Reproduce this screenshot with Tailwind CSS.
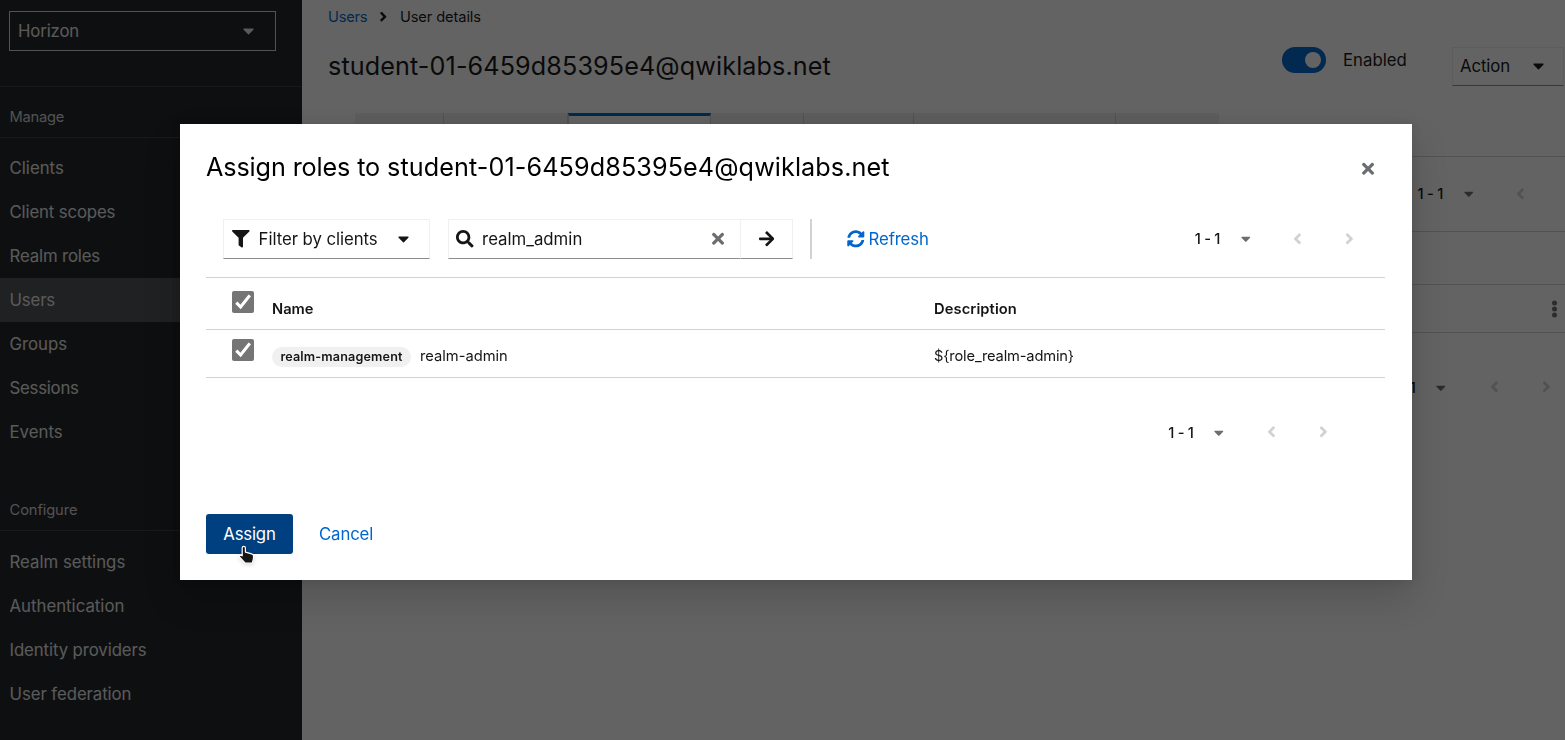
<!DOCTYPE html>
<html lang="en">
<head>
<meta charset="utf-8">
<title>User details</title>
<script src="https://cdn.jsdelivr.net/npm/@tailwindcss/browser@4"></script>
</head>
<body class="h-[740px] w-[1565px] overflow-hidden bg-white font-['Inter',sans-serif] text-[16.8px] leading-6 text-[#151515]">
<svg class="hidden">
  <symbol id="caret" viewBox="0 0 320 512"><path fill="currentColor" d="M31.3 192h257.3c17.8 0 26.7 21.5 14.1 34.1L174.1 354.8c-7.8 7.8-20.5 7.8-28.3 0L17.2 226.1C4.6 213.5 13.5 192 31.3 192z"/></symbol>
  <symbol id="angle" viewBox="0 0 256 512"><path fill="currentColor" d="M224.3 273l-136 136c-9.4 9.4-24.6 9.4-33.9 0l-22.6-22.6c-9.4-9.4-9.4-24.6 0-33.9l96.4-96.4-96.4-96.4c-9.4-9.4-9.4-24.6 0-33.9L54.3 103c9.4-9.4 24.6-9.4 33.9 0l136 136c9.5 9.4 9.5 24.6.1 34z"/></symbol>
  <symbol id="times" viewBox="0 0 352 512"><path fill="currentColor" d="M242.72 256l100.07-100.07c12.28-12.28 12.28-32.19 0-44.48l-22.24-22.24c-12.28-12.28-32.19-12.28-44.48 0L176 189.28 75.93 89.21c-12.28-12.28-32.19-12.28-44.48 0L9.21 111.45c-12.28 12.28-12.28 32.19 0 44.48L109.28 256 9.21 356.07c-12.28 12.28-12.28 32.19 0 44.48l22.24 22.24c12.28 12.28 32.2 12.28 44.48 0L176 322.72l100.07 100.07c12.28 12.28 32.2 12.28 44.48 0l22.24-22.24c12.28-12.28 12.28-32.19 0-44.48L242.72 256z"/></symbol>
  <symbol id="check" viewBox="0 0 22 22"><rect width="22" height="22" rx="2" fill="#757575"/><path d="M4.3 11.7 8.6 16 17.8 4.4" fill="none" stroke="#fff" stroke-width="3.1"/></symbol>
</svg>

<div class="flex h-full">
  <aside class="flex w-[302px] shrink-0 flex-col bg-[#212427] text-[#e6e6e6]">
    <div class="h-[87px] border-b border-[#3c3f42] pt-[11px] pl-[9px]">
      <div class="flex h-10 w-[267px] items-center justify-between border border-[#d2d2d2] pr-[21px] pl-2">
        <span class="tracking-[-0.15px]">Horizon</span>
        <svg class="h-[17.6px] w-[11px]"><use href="#caret"/></svg>
      </div>
    </div>
    <h2 class="flex h-[51px] items-end border-b border-[#3c3f42] pb-[8px] pl-[9.5px] text-[14.7px] tracking-[-0.25px] text-[#d2d2d2]">Manage</h2>
    <nav class="flex flex-col pt-2 tracking-[-0.15px] *:flex *:h-11 *:items-center *:pl-[9.5px]">
      <a class="tracking-normal">Clients</a>
      <a>Client scopes</a>
      <a>Realm roles</a>
      <a class="bg-[#4f5255]">Users</a>
      <a class="tracking-normal">Groups</a>
      <a class="tracking-[-0.25px]">Sessions</a>
      <a class="tracking-normal">Events</a>
    </nav>
    <h2 class="flex h-[77px] items-end border-b border-[#3c3f42] pb-[8px] pl-[9.5px] text-[14.7px] tracking-[-0.1px] text-[#d2d2d2]">Configure</h2>
    <nav class="flex flex-col pt-[9px] *:flex *:h-11 *:items-center *:pl-[9.5px]">
      <a>Realm settings</a>
      <a>Authentication</a>
      <a class="tracking-[-0.1px]">Identity providers</a>
      <a class="tracking-[-0.07px]">User federation</a>
    </nav>
  </aside>

  <main class="flex min-w-0 grow flex-col">
    <div class="flex h-[113px] justify-between pl-[26px]">
      <div>
        <div class="flex h-[34px] items-center text-[14.7px]">
          <span class="tracking-[-0.25px] text-[#0066cc]">Users</span>
          <svg class="mr-[12px] ml-[12px] h-[15.4px] w-[8.6px]"><use href="#angle"/></svg>
          <span class="tracking-[-0.12px]">User details</span>
        </div>
        <h1 class="mt-[14px] text-[25.2px] leading-9 tracking-[0.1px]">student-01-6459d85395e4@qwiklabs.net</h1>
      </div>
      <div class="flex items-start pt-[47px]">
        <div class="flex h-[26px] w-11 items-center justify-end rounded-full bg-[#0066cc] pr-[5px]"><span class="size-4 rounded-full bg-white"></span></div>
        <span class="mt-px ml-[17px] w-[109px]">Enabled</span>
        <div class="flex h-[39px] w-28 items-center border border-[#f0f0f0] border-b-[#8a8d90] pb-px pl-[7px]">
          <span class="w-[72.5px] tracking-[-0.1px]">Action</span>
          <svg class="h-[17.6px] w-[11px]"><use href="#caret"/></svg>
        </div>
        <span class="w-px"></span>
      </div>
    </div>
    <div class="ml-[53px] flex h-[43px] w-[864px] *:border-r *:border-[#d2d2d2] *:bg-[#f0f0f0]">
      <span class="w-[89px]"></span><span class="w-[124px]"></span>
      <span class="w-[143px] border-t-[3px] border-t-[#0066cc]! border-l bg-white!"></span>
      <span class="w-[93px]"></span><span class="w-[110px]"></span><span class="w-[202px]"></span><span class="grow border-r-0!"></span>
    </div>
    <div class="flex h-[76px] items-center justify-end border-y border-[#d2d2d2] pr-[40px]">
      <span class="w-[46px] text-[14.7px] font-medium tracking-[-0.3px]">1 - 1</span>
      <svg class="mr-[43px] h-[15.4px] w-[9.6px] text-[#6a6e73]"><use href="#caret"/></svg>
      <svg class="mb-px h-[17.6px] w-[8.8px] rotate-180 text-[#d2d2d2]"><use href="#angle"/></svg>
    </div>
    <div class="h-[53px] border-b border-[#d2d2d2]"></div>
    <div class="flex h-12 items-center justify-end border-b border-[#d2d2d2] pr-2">
      <svg class="h-[18px] w-[5px] text-[#6a6e73]" viewBox="0 0 5 18"><g fill="currentColor"><circle cx="2.5" cy="3" r="2.5"/><circle cx="2.5" cy="9" r="2.5"/><circle cx="2.5" cy="15" r="2.5"/></g></svg>
    </div>
    <div class="mt-[33px] flex h-11 items-center justify-end pr-[14px]">
      <span class="w-[46px] text-[14.7px] font-medium tracking-[-0.3px]">1 - 1</span>
      <svg class="mr-[44px] h-[15.4px] w-[9.6px] text-[#6a6e73]"><use href="#caret"/></svg>
      <svg class="mr-[43.5px] mb-[2px] h-[17.6px] w-[8.8px] rotate-180 text-[#d2d2d2]"><use href="#angle"/></svg>
      <svg class="mb-[2px] h-[17.6px] w-[8.8px] text-[#d2d2d2]"><use href="#angle"/></svg>
    </div>
  </main>
</div>

<div class="fixed inset-0 flex items-start bg-[#030303]/62 pt-[124px] pl-[180px]">
  <section class="h-[456px] w-[1232px] bg-white pr-[27px] pl-[26px] shadow-[0_18px_35px_0_rgba(3,3,3,0.16),0_0_9px_0_rgba(3,3,3,0.1)]">
    <header class="flex h-[95px] items-center justify-between pr-[11px] pb-[6px]">
      <h1 class="mb-[4px] text-[25.2px] leading-9 tracking-[0.09px] text-black"><span class="tracking-[-0.12px]">Assign roles to </span>student-01-6459d85395e4@qwiklabs.net</h1>
      <svg class="h-[17.6px] w-[12.1px] text-[#6a6e73]"><use href="#times"/></svg>
    </header>

    <div class="flex h-10 items-center pl-[17px]">
      <div class="flex h-10 w-[207px] items-center border border-[#f0f0f0] border-b-[#8a8d90] pl-[8px]">
        <svg class="size-[17.6px]" viewBox="0 0 512 512"><path fill="currentColor" d="M487.976 0H24.028C2.71 0-8.047 25.866 7.058 40.971L192 225.941V432c0 7.831 3.821 15.17 10.237 19.662l80 55.98C298.02 518.69 320 507.493 320 487.98V225.941l184.947-184.97C520.021 25.896 509.338 0 487.976 0z"/></svg>
        <span class="ml-[9px] w-[139.5px] tracking-[-0.07px]">Filter by clients</span>
        <svg class="h-[17.6px] w-[11px] shrink-0"><use href="#caret"/></svg>
      </div>
      <div class="ml-[18px] flex h-10 w-[293px] items-center border border-[#f0f0f0] border-b-[#8a8d90] pl-[7px]">
        <svg class="size-[17.6px]" viewBox="0 0 512 512"><path fill="currentColor" d="M505 442.7L405.3 343c-4.5-4.5-10.6-7-17-7H372c27.6-35.3 44-79.7 44-128C416 93.1 322.9 0 208 0S0 93.1 0 208s93.1 208 208 208c48.3 0 92.7-16.4 128-44v16.3c0 6.4 2.5 12.5 7 17l99.7 99.7c9.4 9.4 24.6 9.4 33.9 0l28.3-28.3c9.4-9.4 9.4-24.6.1-34zM208 336c-70.7 0-128-57.2-128-128 0-70.7 57.2-128 128-128 70.7 0 128 57.2 128 128 0 70.7-57.2 128-128 128z"/></svg>
        <span class="ml-[8.5px] w-[230px]">realm_admin</span>
        <svg class="h-[17.6px] w-[12.1px] shrink-0 text-[#6a6e73]"><use href="#times"/></svg>
      </div>
      <div class="flex h-10 w-[52px] items-center justify-center border border-l-0 border-[#f0f0f0] border-b-[#8a8d90]">
        <svg class="h-[17.6px] w-[15.4px]" viewBox="0 0 448 512"><path fill="currentColor" d="M190.5 66.9l22.2-22.2c9.4-9.4 24.6-9.4 33.9 0L441 239c9.4 9.4 9.4 24.6 0 33.9L246.6 467.3c-9.4 9.4-24.6 9.4-33.9 0l-22.2-22.2c-9.5-9.5-9.3-25 .4-34.3L311.4 296H24c-13.3 0-24-10.7-24-24v-32c0-13.3 10.7-24 24-24h287.4L190.9 101.2c-9.8-9.3-10-24.8-.4-34.3z"/></svg>
      </div>
      <span class="ml-[17px] h-10 w-[2px] bg-[#d2d2d2]"></span>
      <div class="ml-[35px] flex items-center gap-[4px] text-[#0066cc]">
        <svg class="size-[17.6px]" viewBox="0 0 512 512"><path fill="currentColor" d="M370.72 133.28C339.458 104.008 298.888 87.962 255.848 88c-77.458.068-144.328 53.178-162.791 126.85-1.344 5.363-6.122 9.15-11.651 9.15H24.103c-7.498 0-13.194-6.807-11.807-14.176C33.933 94.924 134.813 8 256 8c66.448 0 126.791 26.136 171.315 68.685L463.03 40.97C478.149 25.851 504 36.559 504 57.941V192c0 13.255-10.745 24-24 24H345.941c-21.382 0-32.09-25.851-16.971-40.971l41.75-41.749zM32 296h134.059c21.382 0 32.09 25.851 16.971 40.971l-41.75 41.75c31.262 29.273 71.835 45.319 114.876 45.28 77.418-.07 144.315-53.144 162.787-126.849 1.344-5.363 6.122-9.15 11.651-9.15h57.304c7.498 0 13.194 6.807 11.807 14.176C478.067 417.076 377.187 504 256 504c-66.448 0-126.791-26.136-171.315-68.685L48.97 471.03C33.851 486.149 8 475.441 8 454.059V320c0-13.255 10.745-24 24-24z"/></svg>
        <span class="tracking-[-0.15px]">Refresh</span>
      </div>
      <div class="ml-auto flex items-center pr-[31px]">
        <span class="w-[46px] text-[14.7px] font-medium tracking-[-0.3px]">1 - 1</span>
        <svg class="mr-[42.5px] h-[15.4px] w-[9.6px] text-[#6a6e73]"><use href="#caret"/></svg>
        <svg class="mr-[43.5px] h-[17.6px] w-[8.8px] rotate-180 text-[#d2d2d2]"><use href="#angle"/></svg>
        <svg class="h-[17.6px] w-[8.8px] text-[#d2d2d2]"><use href="#angle"/></svg>
      </div>
    </div>

    <div class="mt-[18px] text-[14.7px] leading-[22px]">
      <div class="grid h-[53px] grid-cols-[66px_662px_1fr] border-y border-[#d2d2d2] font-semibold">
        <svg class="mt-[13px] ml-[26px] size-[22px]"><use href="#check"/></svg>
        <span class="mt-[20px]">Name</span>
        <span class="mt-[20px] tracking-[0.1px]">Description</span>
      </div>
      <div class="grid h-12 grid-cols-[66px_662px_1fr] border-b border-[#d2d2d2]">
        <svg class="mt-[9px] ml-[26px] size-[22px]"><use href="#check"/></svg>
        <div class="mt-[15px] flex items-start">
          <span class="mt-[2px] flex h-5 w-[139px] items-center justify-center rounded-full bg-[#f0f0f0] pb-px text-[12.6px] font-semibold tracking-[0.15px]">realm-management</span>
          <span class="ml-[9px]">realm-admin</span>
        </div>
        <span class="mt-[15px] tracking-[-0.17px]">${role_realm-admin}</span>
      </div>
    </div>

    <div class="mt-[33px] flex h-11 items-center justify-end pr-[57px]">
      <span class="w-[46px] text-[14.7px] font-medium tracking-[-0.3px]">1 - 1</span>
      <svg class="mr-[43px] h-[15.4px] w-[9.6px] text-[#6a6e73]"><use href="#caret"/></svg>
      <svg class="mr-[43.5px] mb-[2px] h-[17.6px] w-[8.8px] rotate-180 text-[#d2d2d2]"><use href="#angle"/></svg>
      <svg class="mb-[2px] h-[17.6px] w-[8.8px] text-[#d2d2d2]"><use href="#angle"/></svg>
    </div>

    <footer class="mt-[59px] flex h-10 items-center">
      <div class="relative flex h-10 w-[87px] items-center justify-center rounded-[3px] bg-[#004080] tracking-[-0.2px] text-white">Assign
        <svg class="absolute top-[31px] left-[32px] h-[20px] w-[18px] drop-shadow-sm" viewBox="0 0 18 20"><path d="M4.2 2.8c0-2 3.2-2 3.2 0v4.4l6.3 1.7c1.4.4 2 1.2 1.9 2.6l-.4 3.5-1 3.2H7.2L1.7 12.1c-.9-1.3.6-2.5 2.5-1.3z" fill="#151515" stroke="#fff" stroke-width="1.2" stroke-linejoin="round"/></svg>
      </div>
      <span class="ml-[26px] tracking-[-0.15px] text-[#0066cc]">Cancel</span>
    </footer>
  </section>
</div>
</body>
</html>
